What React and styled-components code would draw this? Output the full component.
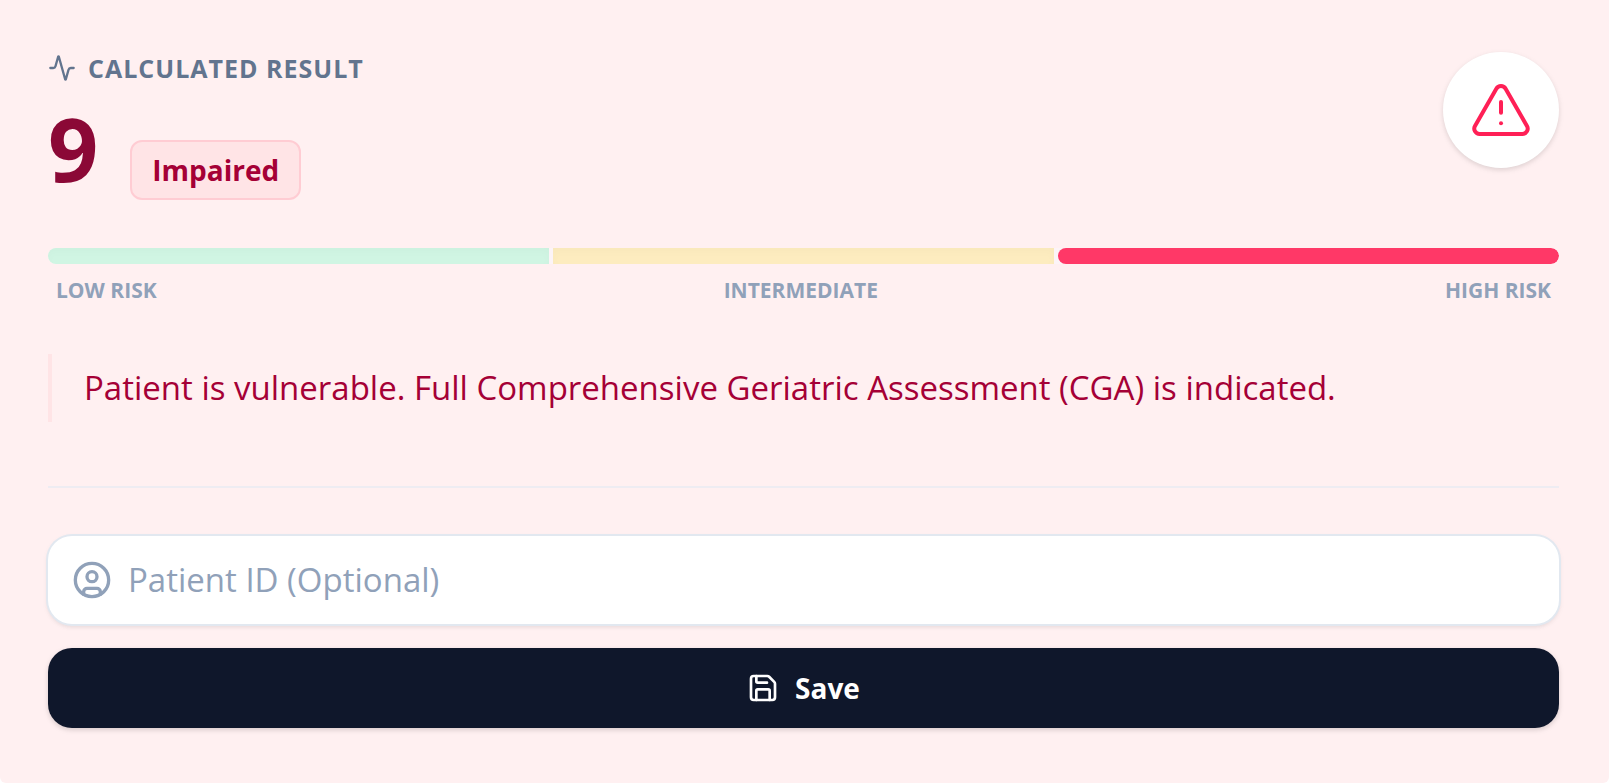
import React from "react";
import styled, { createGlobalStyle } from "styled-components";
import { Activity, TriangleAlert, CircleUser, Save } from "lucide-react";

const GlobalStyle = createGlobalStyle`
  *, *::before, *::after { box-sizing: border-box; }
  body {
    margin: 0;
    background: #ffffff;
    font-family: "Segoe UI", "Open Sans", "Noto Sans", sans-serif;
  }
`;

const Card = styled.main`
  padding: 52px 50px 55px 48px;
  background: #fff0f1;
  border-radius: 0 0 6px 6px;
`;

const Header = styled.header`
  display: flex;
  justify-content: space-between;
  align-items: flex-start;
`;

const Title = styled.h1`
  display: flex;
  align-items: center;
  gap: 12px;
  margin: 0;
  color: #62748e;
  font-size: 25px;
  line-height: 32px;
  font-weight: 700;
  letter-spacing: 1px;
  text-transform: uppercase;
`;

const Score = styled.div`
  display: flex;
  align-items: flex-end;
  gap: 32px;
  margin-top: 12px;
`;

const ScoreValue = styled.span`
  color: #8b0836;
  font-size: 88px;
  line-height: 104px;
  font-weight: 700;
`;

const Badge = styled.span`
  padding: 8px 20px;
  border: 2px solid #ffccd3;
  border-radius: 12px;
  background: #ffe4e6;
  color: #a50036;
  font-size: 28px;
  line-height: 40px;
  font-weight: 700;
`;

const AlertDisc = styled.div`
  display: flex;
  padding: 26px;
  border-radius: 50%;
  background: #ffffff;
  color: #ff2056;
  box-shadow: 0 2px 6px rgba(0, 0, 0, 0.08), 0 2px 4px rgba(0, 0, 0, 0.06);
`;

const Meter = styled.div`
  display: flex;
  gap: 4px;
  height: 16px;
  margin-top: 48px;
  border-radius: 8px;
  overflow: hidden;
  background: #fcf4f7;
`;

const Segment = styled.div`
  flex: 1;
  border-radius: ${(p) => (p.$active ? "8px" : "0")};
  background: ${(p) => p.$color};
  box-shadow: ${(p) => (p.$active ? "none" : "inset 0 4px 8px rgba(0, 0, 0, 0.02)")};
`;

const MeterLabels = styled.div`
  display: flex;
  justify-content: space-between;
  margin-top: 12px;
  padding: 0 8px;
  color: #90a1b9;
  font-size: 21px;
  line-height: 28px;
  font-weight: 700;
  text-transform: uppercase;
`;

const Advice = styled.p`
  margin: 50px 0 64px;
  padding: 4px 0 4px 32px;
  border-left: 4px solid #ffe4e6;
  color: #a50036;
  font-size: 33px;
  line-height: 60px;
`;

const SaveForm = styled.form`
  display: flex;
  flex-direction: column;
  gap: 24px;
  padding-top: 48px;
  border-top: 2px solid #eeecf2;
`;

const Field = styled.label`
  display: flex;
  align-items: center;
  gap: 16px;
  height: 88px;
  padding: 0 24px;
  border-radius: 24px;
  background: #ffffff;
  color: #90a1b9;
  box-shadow: 0 0 0 2px #e2e8f0, 0 2px 6px rgba(0, 0, 0, 0.08), 0 3px 4px rgba(0, 0, 0, 0.05);
`;

const FieldInput = styled.input`
  flex: 1;
  min-width: 0;
  padding: 0;
  border: 0;
  outline: 0;
  background: transparent;
  color: #0f172b;
  font: inherit;
  font-size: 33px;
  line-height: 48px;
  &::placeholder { color: #90a1b9; opacity: 1; }
`;

const SaveButton = styled.button`
  display: flex;
  align-items: center;
  justify-content: center;
  gap: 16px;
  height: 80px;
  padding: 0 24px;
  border: 0;
  border-radius: 24px;
  background: #0f172b;
  color: #ffffff;
  font: inherit;
  font-size: 28px;
  line-height: 40px;
  font-weight: 700;
  box-shadow: 0 2px 6px rgba(0, 0, 0, 0.08), 0 2px 4px rgba(0, 0, 0, 0.08);
`;

const RISKS = [
  { label: "Low Risk", color: "#d0f5e3" },
  { label: "Intermediate", color: "#fdecbf" },
  { label: "High Risk", color: "#ff3867", active: true },
];

export default function App() {
  return (
    <>
      <GlobalStyle />
      <Card>
        <Header>
          <div>
            <Title>
              <Activity size={28} strokeWidth={2} aria-hidden="true" />
              Calculated Result
            </Title>
            <Score>
              <ScoreValue>9</ScoreValue>
              <Badge>Impaired</Badge>
            </Score>
          </div>
          <AlertDisc>
            <TriangleAlert size={64} strokeWidth={1.5} aria-hidden="true" />
          </AlertDisc>
        </Header>
        <Meter>
          {RISKS.map((r) => (
            <Segment key={r.label} $color={r.color} $active={r.active} />
          ))}
        </Meter>
        <MeterLabels>
          {RISKS.map((r) => (
            <span key={r.label}>{r.label}</span>
          ))}
        </MeterLabels>
        <Advice>
          Patient is vulnerable. Full Comprehensive Geriatric Assessment (CGA) is indicated.
        </Advice>
        <SaveForm onSubmit={(e) => e.preventDefault()}>
          <Field>
            <CircleUser size={40} strokeWidth={2} aria-hidden="true" />
            <FieldInput type="text" placeholder="Patient ID (Optional)" aria-label="Patient ID (Optional)" />
          </Field>
          <SaveButton type="submit">
            <Save size={32} strokeWidth={2} aria-hidden="true" />
            Save
          </SaveButton>
        </SaveForm>
      </Card>
    </>
  );
}
